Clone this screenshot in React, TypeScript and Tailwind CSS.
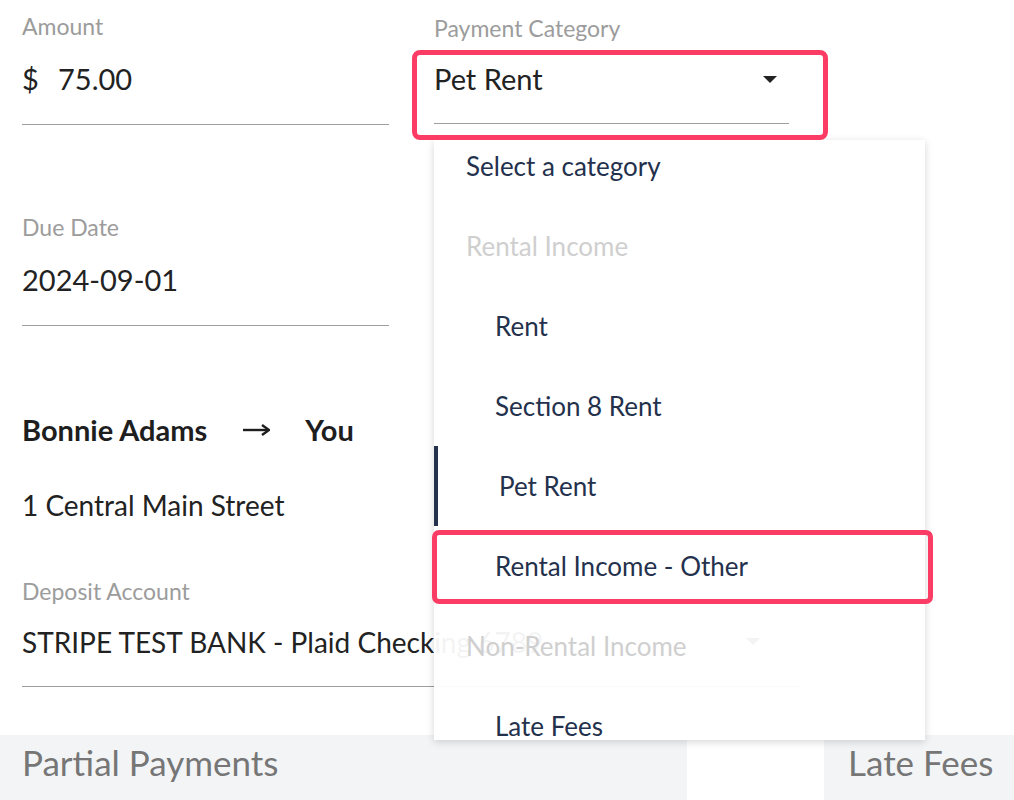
const labelCls = "text-[23px] leading-[28px] text-[#9c9c9c]";
const valueCls = "text-[29px] leading-[36px] text-[#222222]";

function Caret({ className }: { className: string }) {
  return (
    <svg className={className} width="14" height="7" viewBox="0 0 14 7">
      <path d="M0 0 L14 0 L7 7 Z" fill="currentColor" />
    </svg>
  );
}

type Item = { label: string; kind: "header" | "option" | "active" | "placeholder" };

const items: Item[] = [
  { label: "Select a category", kind: "placeholder" },
  { label: "Rental Income", kind: "header" },
  { label: "Rent", kind: "option" },
  { label: "Section 8 Rent", kind: "option" },
  { label: "Pet Rent", kind: "active" },
  { label: "Rental Income - Other", kind: "option" },
  { label: "Non-Rental Income", kind: "header" },
  { label: "Late Fees", kind: "option" },
];

function Dropdown() {
  return (
    <div className="absolute left-0 top-[140px] z-20 w-[491px] h-[600px] overflow-hidden bg-white/[0.95] shadow-[0_2px_8px_rgba(0,0,0,0.16)]">
      <div className="-mt-[14px]">
        {items.map((it) => {
          if (it.kind === "header")
            return (
              <div key={it.label} className="h-[80px] flex items-center pl-[32px] text-[26px] text-[#cfcfcf]">
                {it.label}
              </div>
            );
          if (it.kind === "placeholder")
            return (
              <div key={it.label} className="h-[80px] flex items-center pl-[32px] text-[26px] text-[#24314d]">
                {it.label}
              </div>
            );
          if (it.kind === "active")
            return (
              <div key={it.label} className="h-[80px] flex items-center pl-[61px] border-l-4 border-[#24314d] text-[26px] text-[#24314d]">
                {it.label}
              </div>
            );
          return (
            <div key={it.label} className="h-[80px] flex items-center pl-[61px] text-[26px] text-[#24314d]">
              {it.label}
            </div>
          );
        })}
      </div>
    </div>
  );
}

export default function App() {
  return (
    <div className="relative w-[1014px] h-[800px] overflow-hidden bg-white font-['Lato','Liberation_Sans',sans-serif]">
      <div className="pl-[22px]">
        <div className="flex gap-[45px]">
          {/* left column */}
          <div className="w-[367px]">
            <div className="pt-[12px]">
              <div className={labelCls}>Amount</div>
              <div className={`h-[85px] pt-[21px] border-b border-[#9e9e9e] flex ${valueCls}`}>
                <span className="w-[36px]">$</span>
                <span>75.00</span>
              </div>
            </div>
            <div className="mt-[88px]">
              <div className={labelCls}>Due Date</div>
              <div className={`h-[85px] pt-[21px] border-b border-[#9e9e9e] ${valueCls}`}>2024-09-01</div>
            </div>
          </div>

          {/* right column */}
          <div className="relative w-[355px] pt-[14px]">
            <div className={labelCls}>Payment Category</div>
            <div className={`relative h-[82px] pt-[19px] border-b border-[#9e9e9e] ${valueCls}`}>
              Pet Rent
              <Caret className="absolute right-[12px] top-[34px] text-[#222222]" />
            </div>
            <div className="absolute -left-[22px] top-[50px] w-[416px] h-[90px] rounded-[8px] border-[5px] border-[#fb3c65] z-30" />
            <Dropdown />
            <div className="absolute -left-[2px] top-[530px] w-[501px] h-[74px] rounded-[7px] border-[5px] border-[#fb3c65] z-30" />
          </div>
        </div>

        <div className="mt-[86px] flex items-center text-[29px] leading-[36px] font-bold text-[#1e1e1e]">
          <span>Bonnie Adams</span>
          <svg className="ml-[36px] mr-[35px]" width="27" height="12" viewBox="0 0 27 12">
            <path d="M0 6 H24" stroke="#1e1e1e" strokeWidth="2.4" />
            <path d="M19 1 L26 6 L19 11" fill="none" stroke="#1e1e1e" strokeWidth="2.4" />
          </svg>
          <span>You</span>
        </div>

        <div className="mt-[39px] text-[28px] leading-[36px] text-[#222222]">1 Central Main Street</div>

        <div className="mt-[54px] w-[778px]">
          <div className={labelCls}>Deposit Account</div>
          <div className="relative h-[82px] pt-[19px] border-b border-[#9e9e9e] text-[28px] leading-[36px] text-[#222222]">
            STRIPE TEST BANK - Plaid Checking 6789
            <Caret className="absolute right-[40px] top-[33px] text-[#222222]" />
          </div>
        </div>
      </div>

      <div className="mt-[48px] flex h-[65px] text-[35px] leading-[54px] text-[#767676]">
        <div className="w-[687px] bg-[#f3f4f6] pl-[22px]">Partial Payments</div>
        <div className="w-[137px] bg-white" />
        <div className="flex-1 bg-[#f3f4f6] pl-[24px]">Late Fees</div>
      </div>
    </div>
  );
}
